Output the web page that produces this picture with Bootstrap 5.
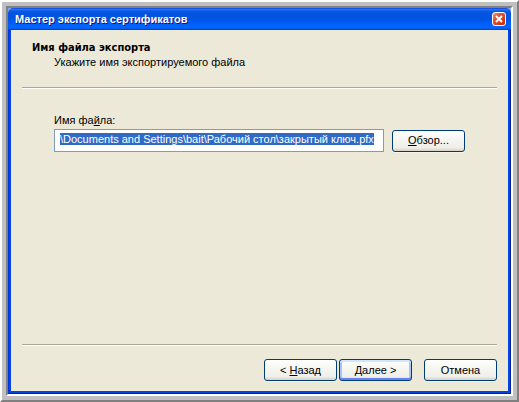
<!DOCTYPE html>
<html lang="ru">
<head>
<meta charset="utf-8">
<meta name="viewport" content="width=device-width, initial-scale=1">
<title>Мастер экспорта сертификатов</title>
<link href="https://cdn.jsdelivr.net/npm/bootstrap@5.3.0/dist/css/bootstrap.min.css" rel="stylesheet">
<style>
body { font: 11px/15px "Liberation Sans", Arial, sans-serif; color: #000; background: #c0c0c0; }
.bevel-outer { border: 2px solid; border-color: #fff #808080 #808080 #fff; padding: 4px; background: #c0c0c0; }
.bevel-inner { border: 2px solid; border-color: #808080 #fff #fff #808080; background: #86a5e4; }
.wizard { background: #ece9d8; border-radius: 5px 5px 0 0; overflow: hidden; }
.titlebar {
  height: 22px; padding: 0 5px 0 7px; color: #fff; text-shadow: 1px 1px #0a1883;
  background: linear-gradient(#0831d9 0, #2a7bf5 5%, #0a5ce8 13%, #0353e0 24%, #0054e3 50%, #005dfa 68%, #0066ff 84%, #0061f5 92%, #003dc9 100%);
}
.titlebar h1 { font: 700 11px/15px "Liberation Sans", Arial, sans-serif; }
.wizard h2 { font: 700 11px/15px "DejaVu Sans Condensed", "DejaVu Sans", sans-serif; }
.close-btn {
  width: 14px; height: 14px; border: 1px solid #fff; border-radius: 3px;
  background: linear-gradient(135deg, #f0a08a 0, #e25a35 30%, #d8401a 65%, #b52c08 100%);
}
.client {
  border: 1px solid; border-top: 0; border-color: #0831d9 #001ea0 #001ea0 #0831d9;
  padding: 0 2px 2px; background: #0046e4;
}
.sheet { background: #ece9d8; padding: 10px 11px 10px; }
.page-head { padding: 0 10px; }
.page-head p { padding-left: 22px; margin-bottom: 17px; }
.groove { height: 2px; border-top: 1px solid #aca899; border-bottom: 1px solid #fff; }
.page-body { padding: 24px 32px 0; }
.page-body label { margin-bottom: 1px; }
.path-field {
  height: 23px; min-width: 0; padding: 2px 5px 6px; border: 1px solid #7f9db9; border-radius: 0;
  background: #fff; line-height: 13px; outline: 0;
}
.path-field::selection { background: #316ac5; color: #fff; }
.xp-btn {
  width: 73px; height: 22px; padding: 0; border: 1px solid #003c74; border-radius: 3px; color: #000;
  font-size: 11px; line-height: 19px;
  background: linear-gradient(#fff 0, #f6f6f2 40%, #f0f0ea 82%, #d6d0c5 100%); box-shadow: 0 1px #f6f4ec;
}
.xp-btn.is-default { box-shadow: inset 0 2px #cee7ff, inset 0 -2px #6982ee, inset 2px 0 #a9c4f3, inset -2px 0 #a9c4f3; }
.actions { padding-top: 13px; gap: 2px; }
.cancel-btn { margin-left: 10px; }
u { text-underline-offset: 1px; }
</style>
<script src="https://cdn.jsdelivr.net/npm/bootstrap@5.3.0/dist/js/bootstrap.bundle.min.js"></script>
</head>
<body>
<div class="bevel-outer min-vh-100 d-flex">
  <div class="bevel-inner flex-fill d-flex">
    <main class="wizard flex-fill d-flex flex-column">
      <header class="titlebar d-flex align-items-center justify-content-between">
        <h1 class="mb-0">Мастер экспорта сертификатов</h1>
        <button type="button" class="close-btn d-flex align-items-center justify-content-center p-0" aria-label="Закрыть">
          <svg width="8" height="8" viewBox="0 0 8 8" aria-hidden="true"><path d="M1 1l6 6M7 1L1 7" stroke="#fff" stroke-width="2"/></svg>
        </button>
      </header>
      <form class="client flex-fill d-flex">
        <div class="sheet flex-fill d-flex flex-column">
          <div class="page-head">
            <h2 class="mb-0">Имя файла экспорта</h2>
            <p>Укажите имя экспортируемого файла</p>
          </div>
          <div class="groove"></div>
          <div class="page-body flex-fill">
            <label class="d-block" for="path">Имя фа<u>й</u>ла:</label>
            <div class="d-flex align-items-center gap-2">
              <input class="path-field flex-fill" id="path" type="text" value="\Documents and Settings\bait\Рабочий стол\закрытый ключ.pfx">
              <button type="button" class="btn xp-btn"><u>О</u>бзор...</button>
            </div>
          </div>
          <div class="groove"></div>
          <div class="actions d-flex justify-content-end">
            <button type="button" class="btn xp-btn">&lt; <u>Н</u>азад</button>
            <button type="submit" class="btn xp-btn is-default"><u>Д</u>алее &gt;</button>
            <button type="button" class="btn xp-btn cancel-btn">Отмена</button>
          </div>
        </div>
      </form>
    </main>
  </div>
</div>
<script>
  const path = document.getElementById('path');
  path.focus();
  path.select();
</script>
</body>
</html>
